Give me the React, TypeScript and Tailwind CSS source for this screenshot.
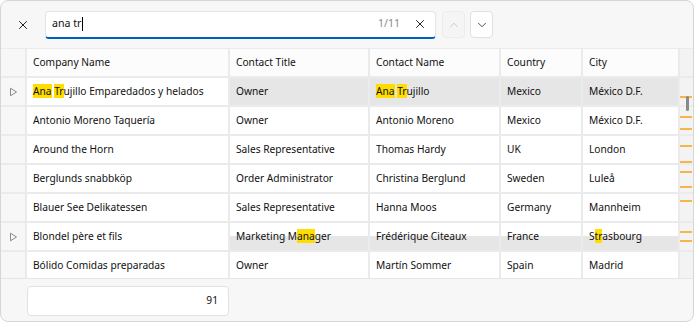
import { X, ChevronUp, ChevronDown } from "lucide-react"

type Row = {
  company: React.ReactNode
  title: React.ReactNode
  name: React.ReactNode
  country: string
  city: React.ReactNode
  current?: boolean
  match?: boolean
}

const Hl = ({ children }: { children: React.ReactNode }) => (
  <span className="bg-[#ffdd00]">{children}</span>
)

const rows: Row[] = [
  {
    company: (
      <>
        <Hl>Ana</Hl> <Hl>Tr</Hl>ujillo Emparedados y helados
      </>
    ),
    title: "Owner",
    name: (
      <>
        <Hl>Ana</Hl> <Hl>Tr</Hl>ujillo
      </>
    ),
    country: "Mexico",
    city: "México D.F.",
    current: true,
  },
  { company: "Antonio Moreno Taquería", title: "Owner", name: "Antonio Moreno", country: "Mexico", city: "México D.F." },
  { company: "Around the Horn", title: "Sales Representative", name: "Thomas Hardy", country: "UK", city: "London" },
  { company: "Berglunds snabbköp", title: "Order Administrator", name: "Christina Berglund", country: "Sweden", city: "Luleå" },
  { company: "Blauer See Delikatessen", title: "Sales Representative", name: "Hanna Moos", country: "Germany", city: "Mannheim" },
  {
    company: "Blondel père et fils",
    title: (
      <>
        Marketing M<Hl>ana</Hl>ger
      </>
    ),
    name: "Frédérique Citeaux",
    country: "France",
    city: (
      <>
        S<Hl>tr</Hl>asbourg
      </>
    ),
    match: true,
  },
  { company: "Bólido Comidas preparadas", title: "Owner", name: "Martín Sommer", country: "Spain", city: "Madrid" },
]

const marks = [96, 116, 128, 145, 161, 171, 186, 200, 231, 240]

function Indicator() {
  return (
    <svg width="9" height="10" viewBox="0 0 9 10" className="text-[#8a8a8a]">
      <path d="M1.5 1.2 L7.5 5 L1.5 8.8 Z" fill="none" stroke="currentColor" strokeWidth="1" />
    </svg>
  )
}

export default function App() {
  const cell = "h-[27px] flex items-center px-[6px] whitespace-nowrap overflow-hidden"
  return (
    <div
      className="w-[694px] h-[322px] bg-[#f7f7f7] border border-[#d6d6d6] rounded-[8px] overflow-hidden flex flex-col text-[10.2px] text-[#111]"
      style={{ fontFamily: '"Noto Sans", "Open Sans", sans-serif' }}
    >
      {/* search bar */}
      <div className="h-[48px] flex items-center shrink-0 border-b border-[#ebebeb]">
        <button className="w-[44px] h-[44px] flex items-center justify-center">
          <X className="w-[14px] h-[14px]" strokeWidth={1.6} />
        </button>
        <div className="w-[391px] h-[28px] bg-white rounded-[4px] border border-[#e5e5e5] border-b-2 border-b-[#005fb8] flex items-center pl-[6px] pr-[8px] text-[10.6px]">
          <span className="flex-1">
            ana tr<span className="inline-block w-px h-[14px] bg-black align-middle ml-px" />
          </span>
          <span className="text-[#8a8a8a] mr-[13px]">1/11</span>
          <X className="w-[14px] h-[14px]" strokeWidth={1.6} />
        </div>
        <button className="ml-[6px] w-[23px] h-[27px] rounded-[4px] border border-[#ececec] bg-[#f5f5f5] flex items-center justify-center text-[#c4c4c4]">
          <ChevronUp className="w-[14px] h-[14px]" strokeWidth={1.5} />
        </button>
        <button className="ml-[5px] w-[23px] h-[27px] rounded-[4px] border border-[#e0e0e0] bg-white flex items-center justify-center text-[#333]">
          <ChevronDown className="w-[14px] h-[14px]" strokeWidth={1.5} />
        </button>
      </div>

      {/* grid */}
      <div className="relative h-[229px] overflow-hidden shrink-0">
        <div className="grid grid-cols-[24px_201px_138px_129px_80px_95px_1fr] gap-[2px] bg-[#ebebeb]">
          <div className="h-[27px] bg-[#f7f7f7]" />
          {["Company Name", "Contact Title", "Contact Name", "Country", "City"].map((h) => (
            <div key={h} className={`${cell} bg-[#fcfcfc]`}>
              {h}
            </div>
          ))}
          <div className="h-[27px] bg-[#f3f3f3]" />
          {rows.map((r, i) => {
            const other = r.current
              ? "bg-[#e6e6e6]"
              : r.match
                ? "bg-[linear-gradient(to_bottom,white_48%,#e6e6e6_48%)]"
                : "bg-white"
            return [
              <div key={`i${i}`} className="h-[27px] bg-[#f7f7f7] flex items-center justify-center">
                {(r.current || r.match) && <Indicator />}
              </div>,
              <div key={`c${i}`} className={`${cell} bg-white`}>
                <span>{r.company}</span>
              </div>,
              <div key={`t${i}`} className={`${cell} ${other}`}>
                <span>{r.title}</span>
              </div>,
              <div key={`n${i}`} className={`${cell} ${other}`}>
                <span>{r.name}</span>
              </div>,
              <div key={`o${i}`} className={`${cell} ${other}`}>
                {r.country}
              </div>,
              <div key={`y${i}`} className={`${cell} ${other}`}>
                <span>{r.city}</span>
              </div>,
              <div key={`s${i}`} className="h-[27px] bg-[#f3f3f3]" />,
            ]
          })}
        </div>
        {/* scrollbar marks */}
        {marks.map((m) => (
          <div key={m} className="absolute left-[679px] w-[12px] h-[2px] bg-[#f7b54a]" style={{ top: m - 49 }} />
        ))}
        <div className="absolute left-[685px] top-[47px] w-[3px] h-[15px] rounded-full bg-[#8a8a8a]" />
      </div>

      {/* footer */}
      <div className="flex-1 border-t border-[#e5e5e5] pl-[26px] pt-[7px]">
        <div className="w-[202px] h-[30px] bg-white border border-[#e2e2e2] rounded-[4px] flex items-center justify-end pr-[10px]">
          91
        </div>
      </div>
    </div>
  )
}
